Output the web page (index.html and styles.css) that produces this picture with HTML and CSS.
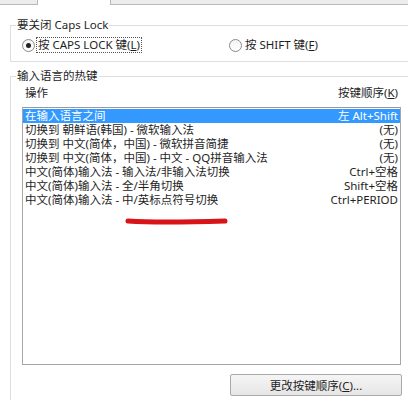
FILE: index.html
```html
<!DOCTYPE html>
<html lang="zh-CN">
<head>
<meta charset="utf-8">
<link rel="stylesheet" href="styles.css">
</head>
<body>
<div class="tabs">
  <div class="tab-left"></div>
  <div class="tab-active"></div>
  <div class="tab-right"></div>
</div>
<div class="page">
  <fieldset class="group group-caps">
    <legend>要关闭 Caps Lock</legend>
    <div class="radios">
      <label class="radio radio-first"><span class="dot checked"></span><span class="rlabel focus">按 CAPS LOCK 键(<u>L</u>)</span></label>
      <label class="radio"><span class="dot"></span><span class="rlabel">按 SHIFT 键(<u>F</u>)</span></label>
    </div>
  </fieldset>
  <fieldset class="group group-keys">
    <legend>输入语言的热键</legend>
    <div class="inner">
      <div class="header"><span>操作</span><span>按键顺序(<u>K</u>)</span></div>
      <div class="list">
        <div class="row selected"><span>在输入语言之间</span><span>左 Alt+Shift</span></div>
        <div class="row"><span>切换到 朝鲜语(韩国) - 微软输入法</span><span>(无)</span></div>
        <div class="row"><span>切换到 中文(简体，中国) - 微软拼音简捷</span><span>(无)</span></div>
        <div class="row"><span>切换到 中文(简体，中国) - 中文 - QQ拼音输入法</span><span>(无)</span></div>
        <div class="row"><span>中文(简体)输入法 - 输入法/非输入法切换</span><span>Ctrl+空格</span></div>
        <div class="row"><span>中文(简体)输入法 - 全/半角切换</span><span>Shift+空格</span></div>
        <div class="row"><span>中文(简体)输入法 - 中/英标点符号切换</span><span>Ctrl+PERIOD</span></div>
        <svg class="mark" width="104" height="10" viewBox="0 0 104 10"><path d="M3 5 C 30 7, 70 6, 100 5" stroke="#d81418" stroke-width="5" stroke-linecap="round" fill="none"/></svg>
      </div>
      <div class="actions"><button class="btn">更改按键顺序(<u>C</u>)...</button></div>
    </div>
  </fieldset>
</div>
</body>
</html>
```
FILE: styles.css
```css
html, body {
  margin: 0;
  padding: 0;
  background: #ffffff;
  overflow: hidden;
}
body {
  width: 408px;
  height: 400px;
  font-family: "Noto Sans", "Noto Sans CJK SC", sans-serif;
  font-size: 11.5px;
  color: #1e1e1e;
}
u { text-decoration: underline; text-underline-offset: 1px; }
.tabs {
  display: flex;
  height: 5px;
}
.tab-left {
  width: 38px;
  background: #ececec;
  border-bottom: 1px solid #b9b9b9;
  border-right: 1px solid #b9b9b9;
  box-sizing: border-box;
}
.tab-active {
  width: 72px;
  background: #ffffff;
}
.tab-right {
  flex: 1;
  background: #ececec;
  border-bottom: 1px solid #b9b9b9;
  border-left: 1px solid #b9b9b9;
  box-sizing: border-box;
}
.page {
  padding-left: 10px;
  overflow: hidden;
}
.group {
  margin: 0 -20px 0 0;
  border: 1px solid #dcdfe2;
  padding: 0 0 0 11px;
  min-width: 0;
}
.group legend {
  margin-left: -6px;
  padding: 0 1px;
  line-height: 14px;
  height: 14px;
}
.group-caps {
  margin-top: 13px;
  padding-bottom: 8px;
}
.radios {
  display: flex;
  align-items: center;
  height: 16px;
  margin-top: 5px;
}
.radio {
  display: flex;
  align-items: center;
  gap: 1px;
}
.radio-first { width: 207px; }
.dot {
  width: 11px;
  height: 11px;
  border: 1px solid #8a8a8a;
  border-radius: 50%;
  background: linear-gradient(#f3f3f3, #ffffff);
  display: flex;
  align-items: center;
  justify-content: center;
  flex-shrink: 0;
}
.dot.checked::after {
  content: "";
  width: 5px;
  height: 5px;
  border-radius: 50%;
  background: #222;
}
.rlabel {
  line-height: 14px;
  padding: 0 1px;
  border: 1px dotted transparent;
}
.rlabel.focus { border-color: #555; }
.group-keys {
  margin-top: 7px;
  padding-bottom: 20px;
}
.inner { width: 379px; }
.header {
  display: flex;
  justify-content: space-between;
  line-height: 14px;
  padding: 3px 3px 0 3px;
  margin-bottom: 7px;
}
.list {
  position: relative;
  height: 255px;
  border: 1px solid #a6a6a6;
  border-top-color: #9a9a9a;
  padding-top: 1px;
}
.row {
  display: flex;
  justify-content: space-between;
  height: 14px;
  line-height: 14px;
  padding: 0 2px;
  white-space: nowrap;
}
.row.selected {
  background: #3399ff;
  color: #ffffff;
}
.mark {
  position: absolute;
  left: 102px;
  top: 108px;
}
.actions {
  display: flex;
  justify-content: flex-end;
  margin-top: 9px;
}
.btn {
  width: 172px;
  height: 22px;
  font: inherit;
  color: #1e1e1e;
  border: 1px solid #a9a9a9;
  border-radius: 2px;
  background: linear-gradient(#f5f5f5, #e6e6e6);
  padding: 0;
  margin-right: -1px;
}
```
